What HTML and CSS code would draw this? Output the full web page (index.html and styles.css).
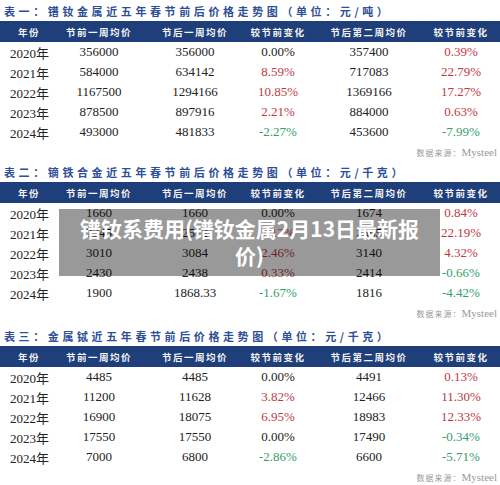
FILE: index.html
```html
<!DOCTYPE html>
<html lang="zh">
  <head>
    <meta charset="UTF-8" />
    <meta name="viewport" content="width=device-width, initial-scale=1.0" />
    <title>镨钕系费用</title>
    <link rel="stylesheet" href="styles.css">
  </head>
  <body>
    <div class="page">
      <section class="tbl">
        <h2 class="cap">表一：镨钕金属近五年春节前后价格走势图（单位：元/吨）</h2>
        <div class="grid head">
          <span>年份</span><span>节前一周均价</span><span>节后一周均价</span>
          <span>较节前变化</span><span>节后第二周均价</span><span>较节前变化</span>
        </div>
        <div class="grid row"><span>2020年</span><span>356000</span><span>356000</span><span>0.00%</span><span>357400</span><span class="up">0.39%</span></div>
        <div class="grid row"><span>2021年</span><span>584000</span><span>634142</span><span class="up">8.59%</span><span>717083</span><span class="up">22.79%</span></div>
        <div class="grid row"><span>2022年</span><span>1167500</span><span>1294166</span><span class="up">10.85%</span><span>1369166</span><span class="up">17.27%</span></div>
        <div class="grid row"><span>2023年</span><span>878500</span><span>897916</span><span class="up">2.21%</span><span>884000</span><span class="up">0.63%</span></div>
        <div class="grid row"><span>2024年</span><span>493000</span><span>481833</span><span class="down">-2.27%</span><span>453600</span><span class="down">-7.99%</span></div>
        <p class="src">数据来源：<span>Mysteel</span></p>
      </section>

      <section class="tbl">
        <h2 class="cap">表二：镝铁合金近五年春节前后价格走势图（单位：元/千克）</h2>
        <div class="grid head">
          <span>年份</span><span>节前一周均价</span><span>节后一周均价</span>
          <span>较节前变化</span><span>节后第二周均价</span><span>较节前变化</span>
        </div>
        <div class="grid row"><span>2020年</span><span>1660</span><span>1660</span><span>0.00%</span><span>1674</span><span class="up">0.84%</span></div>
        <div class="grid row"><span>2021年</span><span>2345</span><span>2512</span><span class="up">7.12%</span><span>2865</span><span class="up">22.19%</span></div>
        <div class="grid row"><span>2022年</span><span>3010</span><span>3084</span><span class="up">2.46%</span><span>3140</span><span class="up">4.32%</span></div>
        <div class="grid row"><span>2023年</span><span>2430</span><span>2438</span><span class="up">0.33%</span><span>2414</span><span class="down">-0.66%</span></div>
        <div class="grid row"><span>2024年</span><span>1900</span><span>1868.33</span><span class="down">-1.67%</span><span>1816</span><span class="down">-4.42%</span></div>
        <p class="src">数据来源：<span>Mysteel</span></p>
      </section>

      <section class="tbl last">
        <h2 class="cap">表三：金属铽近五年春节前后价格走势图（单位：元/千克）</h2>
        <div class="grid head">
          <span>年份</span><span>节前一周均价</span><span>节后一周均价</span>
          <span>较节前变化</span><span>节后第二周均价</span><span>较节前变化</span>
        </div>
        <div class="grid row"><span>2020年</span><span>4485</span><span>4485</span><span>0.00%</span><span>4491</span><span class="up">0.13%</span></div>
        <div class="grid row"><span>2021年</span><span>11200</span><span>11628</span><span class="up">3.82%</span><span>12466</span><span class="up">11.30%</span></div>
        <div class="grid row"><span>2022年</span><span>16900</span><span>18075</span><span class="up">6.95%</span><span>18983</span><span class="up">12.33%</span></div>
        <div class="grid row"><span>2023年</span><span>17550</span><span>17550</span><span>0.00%</span><span>17490</span><span class="down">-0.34%</span></div>
        <div class="grid row"><span>2024年</span><span>7000</span><span>6800</span><span class="down">-2.86%</span><span>6600</span><span class="down">-5.71%</span></div>
        <p class="src">数据来源：<span>Mysteel</span></p>
      </section>

      <div class="banner">镨钕系费用(镨钕金属2月13日最新报价)</div>
    </div>
  </body>
</html>
```

FILE: styles.css
```css
body {
  margin: 0;
  background: #fff;
  font-family: "Liberation Serif", "Noto Sans CJK SC", serif;
}

.page {
  position: relative;
  width: 500px;
  height: 485px;
  overflow: hidden;
}

.tbl {
  display: flex;
  flex-direction: column;
  height: 161px;
}

.last {
  margin-top: 3px;
}

.cap {
  margin: 0;
  height: 21px;
  padding: 4px 0 0 4px;
  box-sizing: border-box;
  font-family: "Noto Sans CJK SC", sans-serif;
  font-size: 11px;
  line-height: 15px;
  font-weight: 700;
  letter-spacing: 3.6px;
  color: #2d4f96;
  white-space: nowrap;
}

.grid {
  display: grid;
  grid-template-columns: 58px 82px 110px 56px 126px 58px;
  align-items: center;
}

.grid span {
  text-align: center;
  white-space: nowrap;
}

.head {
  height: 21px;
  background: #1f3f7b;
  color: #f2f2f2;
  font-family: "Noto Sans CJK SC", sans-serif;
  font-size: 9.5px;
  font-weight: 700;
  letter-spacing: 1.5px;
}

.row {
  height: 20px;
  font-size: 13px;
  color: #222;
}

.row span:first-child {
  text-align: left;
  padding-left: 10px;
}

.up {
  color: #c0393f;
}

.down {
  color: #33a06c;
}

.src {
  margin: 0;
  padding: 4px 3px 0 0;
  text-align: right;
  font-family: "Noto Sans CJK SC", sans-serif;
  font-size: 8px;
  letter-spacing: 1px;
  color: #999;
}

.src span {
  font-family: "Liberation Serif", serif;
  font-size: 11px;
  letter-spacing: 0;
}

.banner {
  position: absolute;
  left: 59px;
  top: 209px;
  width: 381px;
  height: 67px;
  box-sizing: border-box;
  padding: 6px 18px 0;
  background: rgba(0, 0, 0, 0.4);
  color: #fff;
  font-family: "Noto Sans CJK SC", sans-serif;
  font-size: 21px;
  line-height: 27px;
  font-weight: 700;
  text-align: center;
}
```
